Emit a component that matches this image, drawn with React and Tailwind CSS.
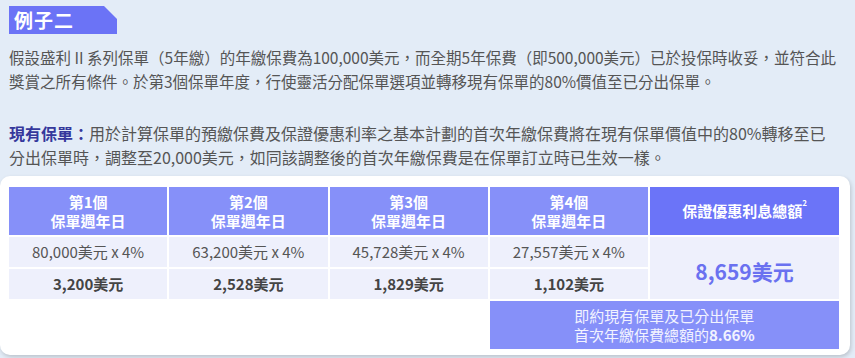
import React from 'react'

const years = [
    { n: 1, base: '80,000', bonus: '3,200' },
    { n: 2, base: '63,200', bonus: '2,528' },
    { n: 3, base: '45,728', bonus: '1,829' },
    { n: 4, base: '27,557', bonus: '1,102' },
]

function App() {
    return (
        <div className="w-full h-[358px] overflow-hidden bg-[#e3ecf7] text-[#555] font-['Noto_Sans_CJK_TC','Noto_Sans',sans-serif]">
            {/* Title tag */}
            <div className="pl-[9px] pt-[6px]">
                <div className="w-[108px] h-[28px] bg-[#6b73f6] text-white font-bold text-[19px] leading-[28px] pl-[5px] tracking-[1px] [clip-path:polygon(0_0,95px_0,108px_13px,108px_100%,0_100%)]">
                    例子二
                </div>
            </div>

            <p className="mt-[11px] px-[9px] text-[15.5px] leading-[24px] whitespace-nowrap">
                假設盛利 II 系列保單（5年繳）的年繳保費為100,000美元，而全期5年保費（即500,000美元）已於投保時收妥，並符合此
                <br />
                獎賞之所有條件。於第3個保單年度，行使靈活分配保單選項並轉移現有保單的80%價值至已分出保單。
            </p>

            <p className="mt-[28px] px-[9px] text-[16px] leading-[24px] whitespace-nowrap">
                <span className="font-bold text-[#35389c]">現有保單：</span>用於計算保單的預繳保費及保證優惠利率之基本計劃的首次年繳保費將在現有保單價值中的80%轉移至已
                <br />
                分出保單時，調整至20,000美元，如同該調整後的首次年繳保費是在保單訂立時已生效一樣。
            </p>

            {/* Table card */}
            <div className="mt-[7px] w-[850px] h-[179px] rounded-[10px] bg-white shadow-[1px_2px_4px_rgba(0,0,0,0.18)] pl-[9px] pr-[11px] pt-[11px]">
                <div className="grid grid-cols-[1fr_1fr_1fr_1fr_189px] grid-rows-[48px_30px_30px_48px] gap-[2px] text-[15px]">
                    {years.map((y) => (
                        <div key={'h' + y.n} className="bg-[#8690f9] text-white font-bold leading-[19px] flex flex-col items-center justify-center">
                            <span>第{y.n}個</span>
                            <span>保單週年日</span>
                        </div>
                    ))}
                    <div className="bg-[#6b74f8] text-white font-bold flex items-center justify-center">
                        保證優惠利息總額<sup className="text-[8px] -mt-2">2</sup>
                    </div>

                    {years.map((y) => (
                        <div key={'b' + y.n} className="bg-[#eef0fc] flex items-center justify-center">
                            {y.base}美元 x 4%
                        </div>
                    ))}
                    <div className="row-span-2 bg-[#eef0fc] flex items-center justify-center pt-[8px] text-[21px] font-bold text-[#6a71f0]">
                        8,659美元
                    </div>

                    {years.map((y) => (
                        <div key={'v' + y.n} className="bg-[#eef0fc] flex items-center justify-center font-bold text-[#444]">
                            {y.bonus}美元
                        </div>
                    ))}

                    <div className="col-span-3" />
                    <div className="col-span-2 bg-[#8690f9] text-[#f2f3ff] leading-[19px] flex flex-col items-center justify-center">
                        <span>即約現有保單及已分出保單</span>
                        <span>首次年繳保費總額的<b>8.66%</b></span>
                    </div>
                </div>
            </div>
        </div>
    )
}

export default App
